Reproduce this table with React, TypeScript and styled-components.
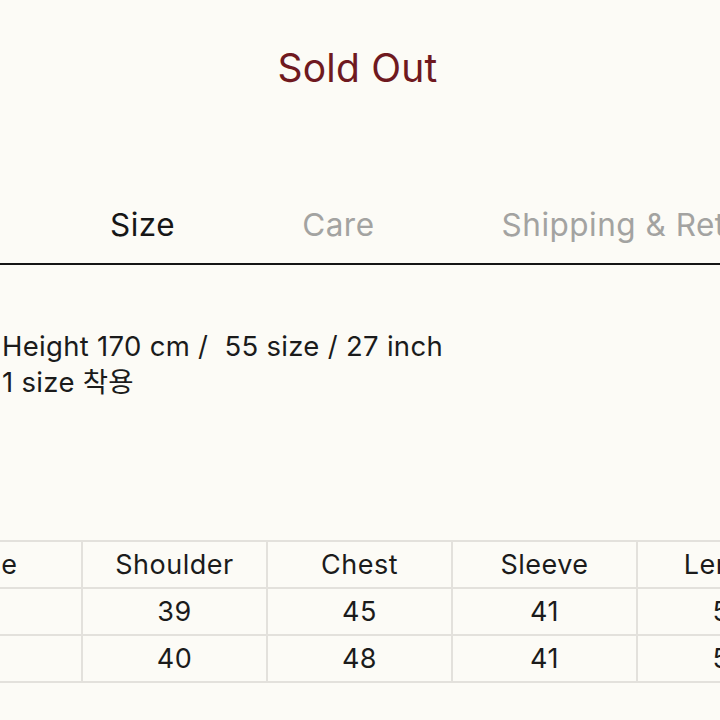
import React from "react";
import styled, { createGlobalStyle } from "styled-components";

const Global = createGlobalStyle`
  html, body {
    margin: 0;
    padding: 0;
    background: #fcfbf6;
  }
  body {
    font-family: Inter, "Noto Sans CJK KR", sans-serif;
    color: #1b1b1b;
  }
`;

const Page = styled.div`
  width: 720px;
  height: 720px;
  overflow: hidden;
  background: #fcfbf6;
`;

const SoldOut = styled.div`
  padding-top: 44px;
  height: 54px;
  text-align: center;
  padding-right: 5px;
  font-size: 39px;
  line-height: 48px;
  color: #6f1920;
  letter-spacing: 0.2px;
`;

const Tabs = styled.div`
  margin-top: 101px;
  display: flex;
  gap: 127px;
  padding-left: 110px;
  padding-bottom: 12px;
  border-bottom: 2px solid #151515;
  white-space: nowrap;
`;

const Tab = styled.div<{ $active?: boolean }>`
  font-size: 31.5px;
  line-height: 52px;
  color: ${(p) => (p.$active ? "#161616" : "#a3a3a1")};
  letter-spacing: 0.5px;
`;

const Info = styled.div`
  margin-top: 63px;
  padding-left: 2px;
  font-size: 27.5px;
  line-height: 36px;
  letter-spacing: 0.3px;
  color: #1b1b1b;
  white-space: pre;
`;

const Table = styled.table`
  margin-top: 140px;
  margin-left: -104px;
  width: 925px;
  border-collapse: collapse;
  table-layout: fixed;
`;

const Cell = styled.td`
  width: 183px;
  height: 45px;
  padding: 0;
  border: 2px solid #e3e1dc;
  text-align: center;
  font-size: 27px;
  line-height: 45px;
  letter-spacing: 0.5px;
  color: #1b1b1b;
  white-space: nowrap;
  overflow: hidden;
`;

const headers = ["Size", "Shoulder", "Chest", "Sleeve", "Length"];
const rows = [
  ["1", "39", "45", "41", "58"],
  ["2", "40", "48", "41", "59"],
];

export default function App() {
  return (
    <Page>
      <Global />
      <SoldOut>Sold Out</SoldOut>
      <Tabs>
        <Tab $active>Size</Tab>
        <Tab>Care</Tab>
        <Tab>Shipping &amp; Returns</Tab>
      </Tabs>
      <Info>
        {"Height 170 cm /  55 size / 27 inch\n1 size 착용"}
      </Info>
      <Table>
        <tbody>
          <tr>
            {headers.map((h) => (
              <Cell key={h}>{h}</Cell>
            ))}
          </tr>
          {rows.map((r, i) => (
            <tr key={i}>
              {r.map((v, j) => (
                <Cell key={j}>{v}</Cell>
              ))}
            </tr>
          ))}
        </tbody>
      </Table>
    </Page>
  );
}
